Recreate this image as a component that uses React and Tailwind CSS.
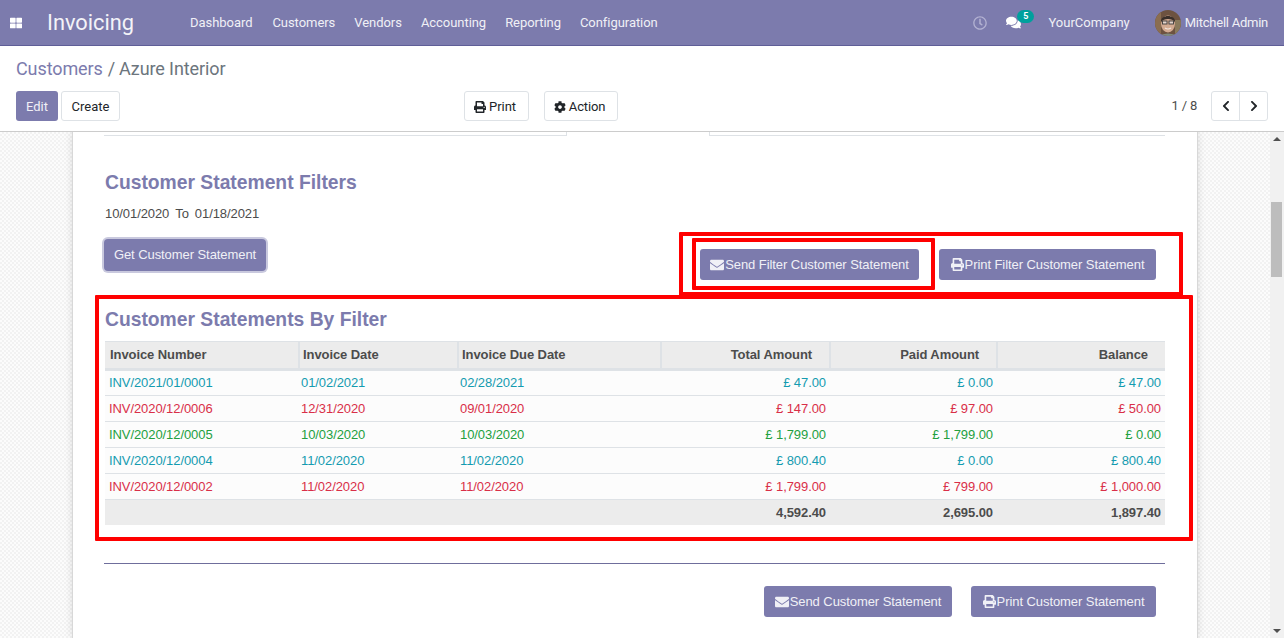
import React from "react";
import { FaThLarge, FaPrint, FaCog, FaChevronLeft, FaChevronRight, FaEnvelope, FaComments, FaRegClock } from "react-icons/fa";

const Btn = ({ icon, children, w }) => (
  <button className={`h-[31px] rounded-[3px] bg-[#7c7bad] text-[13px] tracking-[-0.07px] text-[#f0f0f6] flex items-center justify-center gap-[1px] ${w}`}>
    {icon}
    <span>{children}</span>
  </button>
);

const rows = [
  ["INV/2021/01/0001", "01/02/2021", "02/28/2021", "£ 47.00", "£ 0.00", "£ 47.00", "text-[#149bb0]"],
  ["INV/2020/12/0006", "12/31/2020", "09/01/2020", "£ 147.00", "£ 97.00", "£ 50.00", "text-[#d92f48]"],
  ["INV/2020/12/0005", "10/03/2020", "10/03/2020", "£ 1,799.00", "£ 1,799.00", "£ 0.00", "text-[#23a03f]"],
  ["INV/2020/12/0004", "11/02/2020", "11/02/2020", "£ 800.40", "£ 0.00", "£ 800.40", "text-[#149bb0]"],
  ["INV/2020/12/0002", "11/02/2020", "11/02/2020", "£ 1,799.00", "£ 799.00", "£ 1,000.00", "text-[#d92f48]"],
];

const Avatar = () => (
  <svg width="26" height="26" viewBox="0 0 26 26" className="rounded-full">
    <rect width="26" height="26" fill="#6d5240" />
    <rect x="0" y="0" width="6" height="26" fill="#8a6d50" />
    <rect x="20" y="10" width="6" height="16" fill="#8a7a5c" />
    <ellipse cx="13" cy="14" rx="7" ry="8.5" fill="#d3ab92" />
    <path d="M6 12 C5 4 21 4 20 12 C17 8 9 8 6 12Z" fill="#3a2f2a" />
    <rect x="7.5" y="11" width="4.5" height="3" fill="#e5d5cc" stroke="#3a3a3a" strokeWidth="0.9" />
    <rect x="14" y="11" width="4.5" height="3" fill="#e5d5cc" stroke="#3a3a3a" strokeWidth="0.9" />
    <path d="M10 18 Q13 20 16 18" stroke="#f3e8e0" strokeWidth="1.2" fill="none" />
    <path d="M3 26 Q13 21 23 26Z" fill="#7f8a80" />
  </svg>
);

export default function App() {
  return (
    <div className="h-[638px] w-[1284px] overflow-hidden flex flex-col bg-white font-['Liberation_Sans',sans-serif] text-[13px] text-[#4c4c4c]">
      {/* Navbar */}
      <header className="h-[46px] shrink-0 bg-[#7c7bad] border-b border-[#5f5e97] flex items-center font-['Roboto',sans-serif] text-white">
        <div className="w-[47px] pl-[10px] shrink-0"><FaThLarge className="text-[12px] text-white" /></div>
        <div className="text-[21.8px] w-[143px] shrink-0 text-[#f3f3f8] leading-none">Invoicing</div>
        <nav className="flex gap-[19px] text-[13px] tracking-[-0.05px] text-[#f0f0f6]">
          {["Dashboard", "Customers", "Vendors", "Accounting", "Reporting", "Configuration"].map((t) => (
            <span key={t} className="first:mr-[1px]">{t}</span>
          ))}
        </nav>
        <div className="ml-auto flex items-center text-[#f0f0f6] text-[13px] pr-[16px]">
          <FaRegClock className="text-[14px] text-[#b3b2d2] mr-[19px]" />
          <div className="relative mr-[26px] w-[16px]">
            <FaComments className="text-[15px] text-white" />
            <span className="absolute -top-[5px] left-[11px] w-[17px] h-[13px] rounded-full bg-[#00a09d] text-white text-[9px] leading-[13px] text-center font-bold">5</span>
          </div>
          <span className="mr-[25px]">YourCompany</span>
          <Avatar />
          <span className="ml-[4px] tracking-[-0.25px]">Mitchell Admin</span>
        </div>
      </header>

      {/* Control panel */}
      <div className="h-[86px] shrink-0 bg-white border-b border-[#ccc] px-[16px] font-['Roboto',sans-serif]">
        <div className="h-[45px] flex items-center text-[18px] tracking-[-0.1px]">
          <span className="text-[#7c7bad]">Customers</span>
          <span className="text-[#6c757d] ml-[5px] mr-[4px]">/</span>
          <span className="text-[#6c757d]">Azure Interior</span>
        </div>
        <div className="flex items-center">
          <button className="h-[30px] w-[42px] rounded-[3px] bg-[#7c7bad] text-[13px] text-[#f0f0f6] pt-[1px]">Edit</button>
          <button className="ml-[3px] h-[30px] w-[59px] rounded-[3px] bg-white border border-[#dee2e6] text-[13px] text-[#212529] pt-[1px]">Create</button>
          <button className="ml-[344px] h-[30px] w-[65px] rounded-[3px] bg-white border border-[#dee2e6] text-[13px] text-[#212529] flex items-center justify-center gap-[3px] tracking-[-0.05px] pt-[1px] pr-[3px]"><FaPrint className="text-[12px]" />Print</button>
          <button className="ml-[15px] h-[30px] w-[74px] rounded-[3px] bg-white border border-[#dee2e6] text-[13px] text-[#212529] flex items-center justify-center gap-[3px] tracking-[-0.15px] pt-[1px] pr-[3px]"><FaCog className="text-[12px]" />Action</button>
          <span className="ml-auto text-[13px] tracking-[-0.2px] text-[#4c4c4c] mr-[14px]">1 / 8</span>
          <div className="flex h-[30px] w-[57px] rounded-[3px] border border-[#dee2e6] text-[#212529]">
            <span className="flex-1 flex items-center justify-center border-r border-[#dee2e6]"><FaChevronLeft className="text-[12px]" /></span>
            <span className="flex-1 flex items-center justify-center"><FaChevronRight className="text-[12px]" /></span>
          </div>
        </div>
      </div>

      {/* Body */}
      <div className="flex-1 min-h-0 flex">
        <main className="flex-1 min-w-0 overflow-hidden pl-[72px] bg-[repeating-conic-gradient(#f2f2f2_0_25%,#fcfcfc_0_50%)] bg-[length:4px_4px]">
          <div className="w-[1126px] h-full bg-white border-x border-[#d8d8d8] shadow-[0_0_8px_rgba(0,0,0,0.12)] pl-[31px] pr-[32px]">
            {/* tab remnant */}
            <div className="flex h-[4px] text-[0px]">
              <div className="w-[463px] border-b border-r border-[#dee2e6]" />
              <div className="w-[142px]" />
              <div className="w-[456px] border-b border-l border-[#dee2e6]" />
            </div>

            <div className="pl-[1px]">
              <h2 className="mt-[35px] text-[19.3px] leading-[24px] font-bold text-[#7c7bad]">Customer Statement Filters</h2>
              <div className="mt-[10px] leading-[18px] text-[13px] tracking-[-0.08px] flex gap-[6px]"><span>10/01/2020</span><span>To</span><span>01/18/2021</span></div>
            </div>

            <div className="relative h-[72px]">
              <button className="absolute left-0 top-[16px] w-[162px] h-[32px] rounded-[4px] bg-[#7c7bad] text-[13px] tracking-[-0.07px] text-[#f0f0f6] ring-2 ring-[#c9c9de]">Get Customer Statement</button>
              <div className="absolute left-[575px] top-[9px] w-[504px] h-[64px] border-[4px] border-[#ff0000] rounded-[1px] z-10" />
              <div className="absolute left-[588px] top-[15px] w-[243px] h-[52px] border-[4px] border-[#ff0000] rounded-[1px] flex items-start justify-start pl-[4px] pt-[7px] z-20">
                <Btn w="w-[219px]" icon={<FaEnvelope className="text-[14px]" />}>Send Filter Customer Statement</Btn>
              </div>
              <div className="absolute left-[835px] top-[26px] z-20">
                <Btn w="w-[217px]" icon={<FaPrint className="text-[13px]" />}>Print Filter Customer Statement</Btn>
              </div>
            </div>

            <section className="relative -mx-[9px] w-[1098px] h-[246px] border-[4px] border-[#ff0000] rounded-[1px] pl-[6px] pr-[24px] bg-white">
              <h2 className="mt-[9px] text-[19.3px] leading-[24px] font-bold text-[#7c7bad]">Customer Statements By Filter</h2>
              <table className="mt-[9px] w-[1060px] table-fixed border-collapse text-[13px] tracking-[-0.08px]">
                <colgroup>
                  <col className="w-[194px]" /><col className="w-[159px]" /><col className="w-[203px]" /><col className="w-[169px]" /><col className="w-[167px]" /><col className="w-[168px]" />
                </colgroup>
                <thead>
                  <tr className="h-[28px] bg-[#ececec] border-t border-[#dee2e6] border-b-[3px] border-b-[#dee2e6] font-bold">
                    <th className="text-left pl-[5px] font-bold border-r-2 border-[#dee2e6]">Invoice Number</th>
                    <th className="text-left pl-[3px] font-bold border-r-2 border-[#dee2e6]">Invoice Date</th>
                    <th className="text-left pl-[3px] font-bold border-r-2 border-[#dee2e6]">Invoice Due Date</th>
                    <th className="text-right pr-[17px] font-bold border-r-2 border-[#dee2e6]">Total Amount</th>
                    <th className="text-right pr-[17px] font-bold border-r-2 border-[#dee2e6]">Paid Amount</th>
                    <th className="text-right pr-[17px] font-bold">Balance</th>
                  </tr>
                </thead>
                <tbody>
                  {rows.map((r) => (
                    <tr key={r[0]} className={`h-[26px] bg-[#fcfcfc] border-b border-[#dee2e6] ${r[6]}`}>
                      <td className="pl-[4px]">{r[0]}</td>
                      <td className="pl-[2px]">{r[1]}</td>
                      <td className="pl-[2px]">{r[2]}</td>
                      <td className="text-right pr-[4px]">{r[3]}</td>
                      <td className="text-right pr-[4px]">{r[4]}</td>
                      <td className="text-right pr-[4px]">{r[5]}</td>
                    </tr>
                  ))}
                  <tr className="h-[25px] bg-[#ececec] font-bold">
                    <td /><td /><td />
                    <td className="text-right pr-[4px]">4,592.40</td>
                    <td className="text-right pr-[4px]">2,695.00</td>
                    <td className="text-right pr-[4px]">1,897.40</td>
                  </tr>
                </tbody>
              </table>
            </section>

            <hr className="mt-[22px] w-[1061px] border-t border-[#6f6e9c]" />
            <div className="mt-[22px] w-[1052px] flex justify-end gap-[19px]">
              <Btn w="w-[188px]" icon={<FaEnvelope className="text-[14px]" />}>Send Customer Statement</Btn>
              <Btn w="w-[185px]" icon={<FaPrint className="text-[13px]" />}>Print Customer Statement</Btn>
            </div>
          </div>
        </main>
        <aside className="w-[14px] shrink-0 bg-[#f1f1f1] flex flex-col items-center">
          <div className="mt-[5px] w-0 h-0 border-x-[4px] border-x-transparent border-b-[4px] border-b-[#505050]" />
          <div className="mt-[61px] w-[11px] -ml-[1px] h-[75px] bg-[#bdbdbd]" />
          <div className="mt-auto mb-[5px] w-0 h-0 border-x-[4px] border-x-transparent border-t-[4px] border-t-[#505050]" />
        </aside>
      </div>
    </div>
  );
}
